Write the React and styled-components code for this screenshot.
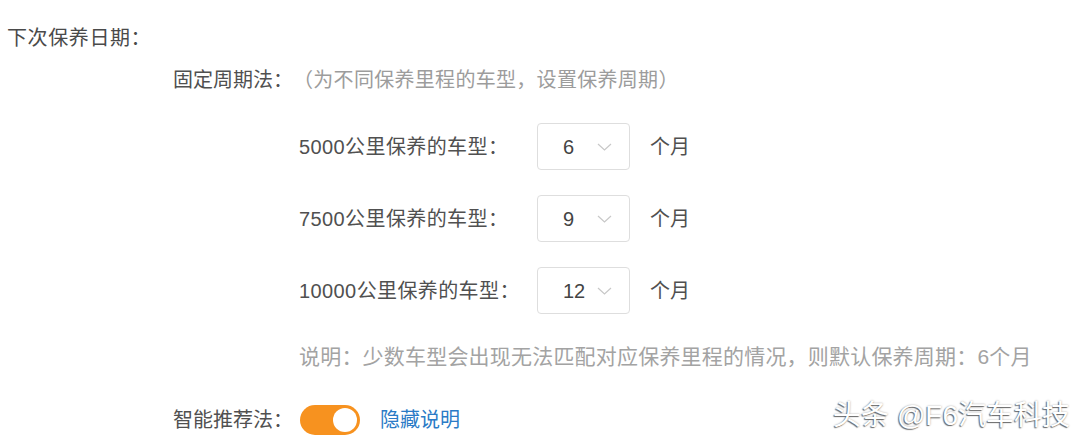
import React from 'react';
import styled, { createGlobalStyle } from 'styled-components';

const GlobalStyle = createGlobalStyle`
  html, body {
    margin: 0;
    padding: 0;
    background: #fff;
  }
  body {
    font-family: "Liberation Sans", "Noto Sans CJK SC", sans-serif;
  }
`;

const Page = styled.div`
  position: relative;
  width: 1080px;
  height: 436px;
  overflow: hidden;
  box-sizing: border-box;
  padding: 28px 0 0 7px;
  color: #505050;
  font-size: 20px;
  line-height: 20px;
`;

const Title = styled.div`
  color: #4a4a4a;
  letter-spacing: 0.6px;
`;

const Section = styled.div`
  padding-left: 166px;
  margin-top: 22px;
`;

const Sub = styled.div`
  display: flex;
  align-items: center;
  white-space: nowrap;
`;

const Hint = styled.span`
  color: #9c9c9c;
  letter-spacing: 0.3px;
`;

const Rows = styled.div`
  display: flex;
  flex-direction: column;
  gap: 25px;
  padding-left: 126px;
  margin-top: 33px;
`;

const Row = styled.div`
  display: flex;
  align-items: center;
`;

const Label = styled.span`
  box-sizing: border-box;
  min-width: 238px;
  padding-right: 4px;
  white-space: nowrap;
  letter-spacing: 0.4px;
`;

const Select = styled.div`
  box-sizing: border-box;
  width: 93px;
  height: 47px;
  border: 1px solid #dedede;
  border-radius: 4px;
  display: flex;
  align-items: center;
  padding-left: 25px;
  color: #444;
`;

const Value = styled.span`
  width: 34px;
`;

const Unit = styled.span`
  margin-left: 20px;
`;

const Note = styled.div`
  padding-left: 126px;
  margin-top: 33px;
  color: #a3a3a3;
  white-space: nowrap;
  font-size: 21px;
  letter-spacing: 0.2px;
`;

const Smart = styled.div`
  display: flex;
  align-items: center;
  margin-top: 38px;
`;

const Toggle = styled.div`
  box-sizing: border-box;
  width: 60px;
  height: 30px;
  border-radius: 15px;
  background: #f7921f;
  display: flex;
  align-items: center;
  justify-content: ${p => (p.$on ? 'flex-end' : 'flex-start')};
  padding: 3px;
  margin-left: 7px;
`;

const Knob = styled.span`
  width: 24px;
  height: 24px;
  border-radius: 50%;
  background: #fff;
`;

const Link = styled.span`
  color: #2b7bc6;
  margin-left: 20px;
`;

const Watermark = styled.div`
  position: absolute;
  right: 10px;
  bottom: 4px;
  color: #fff;
  font-size: 28px;
  line-height: 32px;
  white-space: nowrap;
  text-shadow: -1px 1px 1px rgba(0, 0, 0, 0.55), 0 0 2px rgba(0, 0, 0, 0.35);
`;

const Chevron = () => (
  <svg width="15" height="8" viewBox="0 0 15 8" fill="none">
    <path d="M1 1l6.5 6L14 1" stroke="#c8c8c8" strokeWidth="1.2" />
  </svg>
);

const periods = [
  { km: '5000', value: '6' },
  { km: '7500', value: '9' },
  { km: '10000', value: '12' },
];

export default function App() {
  return (
    <Page>
      <GlobalStyle />
      <Title>下次保养日期：</Title>
      <Section>
        <Sub>
          固定周期法：<Hint>（为不同保养里程的车型，设置保养周期）</Hint>
        </Sub>
        <Rows>
          {periods.map(p => (
            <Row key={p.km}>
              <Label>{p.km}公里保养的车型：</Label>
              <Select>
                <Value>{p.value}</Value>
                <Chevron />
              </Select>
              <Unit>个月</Unit>
            </Row>
          ))}
        </Rows>
        <Note>说明：少数车型会出现无法匹配对应保养里程的情况，则默认保养周期：6个月</Note>
        <Smart>
          智能推荐法：
          <Toggle $on>
            <Knob />
          </Toggle>
          <Link>隐藏说明</Link>
        </Smart>
      </Section>
      <Watermark>头条 @F6汽车科技</Watermark>
    </Page>
  );
}
